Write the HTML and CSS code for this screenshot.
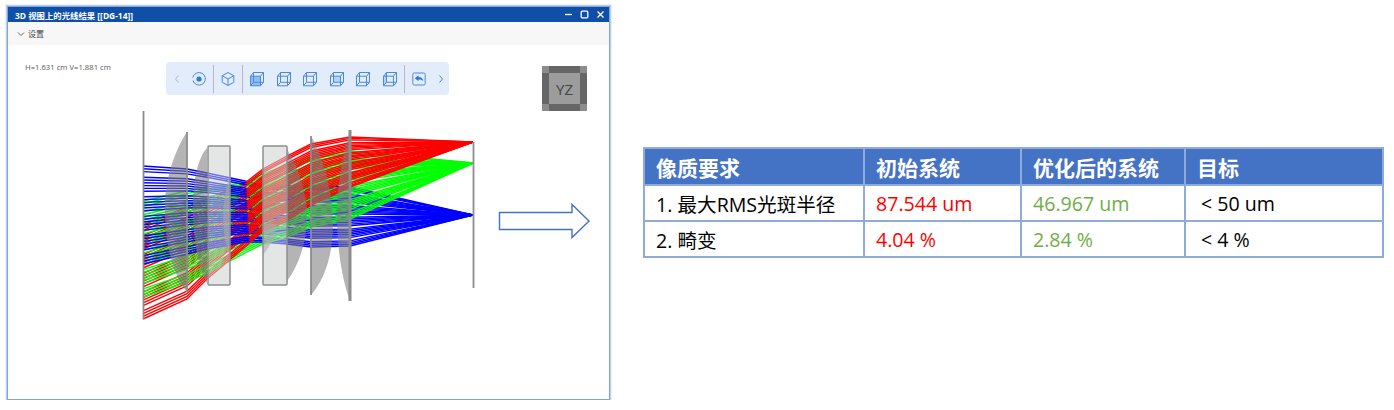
FILE: index.html
```html
<!DOCTYPE html>
<html lang="en">
<head>
    <meta charset="UTF-8" />
    <title>3D 视图上的光线结果</title>
    <link rel="stylesheet" href="styles.css">
</head>
<body>

    <svg class="defs" width="0" height="0">
        <symbol id="wire" viewBox="0 0 16 16">
            <path d="M1.5 5.200h10v9.600h-10zM4.500 1.500h10v9.800h-10zM1.500 5.200l3-3.700M11.500 5.200l3-3.700M11.500 14.800l3-3.500M1.500 14.800l3-3.500" />
        </symbol>
    </svg>

    <div class="window">
        <div class="titlebar">
            <span class="title">3D 视图上的光线结果 [[DG-14]]</span>
            <div class="win-btns">
                <svg width="9" height="9" viewBox="0 0 9 9"><path d="M1 4.500h7" /></svg>
                <svg width="9" height="9" viewBox="0 0 9 9"><rect x="1.200" y="1.200" width="6.600" height="6.600" rx="1" /></svg>
                <svg width="9" height="9" viewBox="0 0 9 9"><path d="M1.500 1.500l6 6M7.500 1.500l-6 6" /></svg>
            </div>
        </div>

        <div class="settings">
            <svg width="8" height="8" viewBox="0 0 8 8"><path d="M1 2.500l3 3 3-3" /></svg>
            <span>设置</span>
        </div>

        <div class="canvas">
            <div class="top-row">
                <div class="readout">H=1.631 cm V=1.881 cm</div>
                <div class="toolbar">
                    <svg class="chev" width="8" height="10" viewBox="0 0 8 10"><path d="M5.500 1.500L2.500 5l3 3.500" /></svg>
                    <svg class="tool" width="16" height="16" viewBox="0 0 16 16"><path d="M3.500 3.500A6.300 6.300 0 1 1 2 9.500M1.800 6.500A6.300 6.300 0 0 1 3.500 3.500" /><circle class="dot" cx="8" cy="8" r="2.600" /></svg>
                    <i class="sep"></i>
                    <svg class="tool" width="16" height="16" viewBox="0 0 16 16"><path d="M8 1.500l5.800 3.200v6.600L8 14.500l-5.800-3.200V4.700zM2.200 4.700L8 8l5.800-3.300M8 8v6.500" /></svg>
                    <i class="sep"></i>
                    <svg class="tool" width="16" height="16" viewBox="0 0 16 16"><rect class="face" x="1.500" y="5.200" width="10" height="9.600" /><use href="#wire" /></svg>
                    <svg class="tool" width="16" height="16" viewBox="0 0 16 16"><use href="#wire" /></svg>
                    <svg class="tool" width="16" height="16" viewBox="0 0 16 16"><use href="#wire" /></svg>
                    <svg class="tool" width="16" height="16" viewBox="0 0 16 16"><rect class="face pale" x="4.500" y="5.200" width="7" height="6.100" /><use href="#wire" /></svg>
                    <svg class="tool" width="16" height="16" viewBox="0 0 16 16"><use href="#wire" /></svg>
                    <svg class="tool" width="16" height="16" viewBox="0 0 16 16"><path class="face pale" d="M1.500 5.200l3-3.700v9.800l-3 3.500z" /><use href="#wire" /></svg>
                    <i class="sep"></i>
                    <svg class="tool" width="16" height="16" viewBox="0 0 16 16"><rect x="1.800" y="2" width="12.400" height="12" rx="1.500" /><path class="dot" d="M3.800 7.200L7.500 4.200v1.900c2.700 0 4.300 1.300 4.800 4-1.200-1.400-2.700-1.800-4.800-1.700v1.900z" /></svg>
                    <svg class="chev" width="8" height="10" viewBox="0 0 8 10"><path d="M2.500 1.500L5.500 5l-3 3.500" /></svg>
                </div>
                <div class="view-cube">
                    <i class="c"></i><i class="e"></i><i class="c"></i>
                    <i class="e"></i><span class="face-label">YZ</span><i class="e"></i>
                    <i class="c"></i><i class="e"></i><i class="c"></i>
                </div>
            </div>

            <!-- viewBox uses screen coords so the lens numbers stay readable -->
            <svg id="diagram" class="diagram" width="600" height="210" viewBox="8 112 600 210">
                <g id="rays"></g>
                <g class="glass">
                    <path d="M187 133C172 155 163 190 165 218C166 250 175 280 187 293z" />
                    <path d="M207 149C197 160 192 185 193 215C194 245 199 272 207 284z" />
                    <path d="M230 176C222 195 220 235 230 258z" />
                    <path d="M287 150C300 172 307 195 307 218C307 240 300 265 287 282z" />
                    <path d="M263 256C272 245 275 235 276 225L263 225z" />
                    <path d="M311 137C324 160 333 195 333 225C333 255 325 280 311 296z" />
                    <path d="M350 131C340 165 337 195 337 215C337 250 342 280 350 302z" />
                </g>
                <g class="plates">
                    <rect x="208" y="147" width="22" height="139" rx="1" />
                    <rect x="263" y="147" width="24" height="139" rx="1" />
                </g>
                <g class="edges">
                    <path d="M143.500 112V320" />
                    <path d="M187 133V293" />
                    <path d="M311 137V296" />
                    <path class="thick" d="M350 131V302" />
                    <path d="M473.500 143V289" />
                </g>
                <path class="arrow" d="M499.500 213.500H572V205.500L589 222L572 238.500V230.500H499.500z" />
            </svg>
        </div>
    </div>

    <table class="quality">
        <thead>
            <tr>
                <th class="col-a">像质要求</th>
                <th class="col-b">初始系统</th>
                <th class="col-c">优化后的系统</th>
                <th class="col-d">目标</th>
            </tr>
        </thead>
        <tbody>
            <tr>
                <td>1. 最大RMS光斑半径</td>
                <td class="bad">87.544 um</td>
                <td class="good">46.967 um</td>
                <td class="goal">&lt; 50 um</td>
            </tr>
            <tr>
                <td>2. 畸变</td>
                <td class="bad">4.04 %</td>
                <td class="good">2.84 %</td>
                <td class="goal">&lt; 4 %</td>
            </tr>
        </tbody>
    </table>

    <script src="rays.js"></script>
</body>
</html>
```

FILE: styles.css
```css
body {
    margin: 0;
    display: flex;
    align-items: flex-start;
    background: #fff;
    font-family: "Open Sans", "Noto Sans CJK SC", sans-serif;
    overflow: hidden;
}

.defs {
    position: absolute;
}

.window {
    flex: none;
    width: 603px;
    height: 394px;
    margin: 6px 0 0 7px;
    box-sizing: border-box;
    border: 1px solid #7ea6e0;
    box-shadow: 0 0 0 1px #b9cfee, 0 0 0 2px #efefef;
    background: #fff;
    display: flex;
    flex-direction: column;
}

.titlebar {
    height: 15px;
    background: #0f4fa8;
    color: #fff;
    display: flex;
    align-items: center;
    justify-content: space-between;
    padding: 0 4px 0 7px;
}

.title {
    font-size: 8.400px;
    font-weight: 700;
}

.win-btns {
    display: flex;
    gap: 7px;
}

.win-btns svg {
    fill: none;
    stroke: #fff;
    stroke-width: 1.300;
}

.settings {
    height: 23px;
    background: #f7f7f7;
    display: flex;
    align-items: center;
    gap: 3px;
    padding-left: 9px;
    font-size: 8px;
    color: #444;
}

.settings svg {
    fill: none;
    stroke: #555;
    stroke-width: 0.900;
}

.canvas {
    flex: 1;
    padding-top: 17px;
}

.top-row {
    height: 49px;
    display: flex;
    align-items: flex-start;
}

.readout {
    width: 158px;
    padding-left: 17px;
    box-sizing: border-box;
    font-size: 7.700px;
    line-height: 11px;
    color: #5a5a5a;
}

.toolbar {
    width: 283px;
    height: 33px;
    box-sizing: border-box;
    background: #e3ecfa;
    border-radius: 4px;
    display: flex;
    align-items: center;
    padding: 0 0 0 7px;
}

.tool {
    flex: none;
    fill: none;
    stroke: #4a8ade;
    stroke-width: 1;
}

.tool + .tool {
    margin-left: 10.600px;
}

.tool .dot {
    fill: #2f78d6;
    stroke: none;
}

.tool .face {
    fill: #8fbdf0;
    stroke: none;
}

.tool .pale {
    fill: #b5d3f5;
}

.chev {
    flex: none;
    fill: none;
    stroke: #9dbbe8;
    stroke-width: 1;
    margin-right: 10px;
}

.chev:last-child {
    stroke: #4a8ade;
    margin: 0 0 0 10px;
}

.sep {
    flex: none;
    width: 1px;
    height: 28px;
    margin: 0 6px;
    background: #b4b9c2;
}

.view-cube {
    width: 45px;
    height: 45px;
    margin: 4px 0 0 93px;
    display: grid;
    grid-template-columns: 7px 1fr 7px;
    grid-template-rows: 7px 1fr 7px;
}

.view-cube .c {
    background: #8c8c8c;
}

.view-cube .e {
    background: #666;
}

.face-label {
    background: #9c9c9c;
    color: #444;
    font-size: 15px;
    display: flex;
    align-items: center;
    justify-content: center;
}

.diagram {
    display: block;
}

#rays polyline {
    fill: none;
    stroke-width: 1.400;
}

.glass path {
    fill: rgba(125, 125, 125, 0.58);
}

.plates rect {
    fill: rgba(205, 208, 208, 0.55);
    stroke: #8e8e8e;
    stroke-width: 1.500;
}

.edges path {
    fill: none;
    stroke: #8c8c8c;
    stroke-width: 1.800;
}

.edges .thick {
    stroke-width: 3;
}

.arrow {
    fill: #fff;
    stroke: #4472c4;
    stroke-width: 1.400;
}

.quality {
    flex: none;
    margin: 147px 0 0 33px;
    width: 741px;
    table-layout: fixed;
    border-collapse: collapse;
    font-size: 19.600px;
    color: #000;
}

.quality th,
.quality td {
    border: 2px solid #8faadc;
    text-align: left;
    padding: 0 0 0 11px;
    font-weight: 400;
}

.quality th {
    height: 37px;
    box-sizing: border-box;
    background: #4472c4;
    color: #fff;
    font-size: 21px;
    font-weight: 700;
}

.quality td {
    height: 36px;
    box-sizing: border-box;
}

.col-a {
    width: 220px;
}

.col-b {
    width: 157px;
}

.col-c {
    width: 164px;
}

.bad {
    color: #f00;
}

.good {
    color: #70ad47;
}

.quality .goal {
    padding-left: 15px;
}
```

FILE: rays.js
```js
// each fan: colour, then top and bottom y at every surface in xs
var xs = [143, 187, 207, 245, 263, 287, 311, 350, 473];

var fans = [
    { color: '#0000ff', top: [167, 170, 174, 182, 187, 187, 187, 188, 216], bottom: [265, 255, 250, 243, 243, 245, 248, 247, 216] },
    { color: '#00ff00', top: [202, 192, 188, 184, 175, 166, 158, 152, 164], bottom: [298, 283, 274, 254, 245, 238, 228, 220, 164] },
    { color: '#ff0000', top: [226, 208, 200, 184, 170, 157, 145, 138, 143], bottom: [320, 300, 280, 248, 232, 222, 206, 188, 143] }
];

var COUNT = 36;
var group = document.getElementById('rays');

// draw the fans mixed, not one over the other, and leave a gap every few rays
for (var i = 0; i < COUNT; i++) {
    if (i % 7 === 3) continue;
    fans.forEach(function(fan) {
        var t = i / (COUNT - 1);
        var pts = xs.map(function(x, k) {
            return x + ',' + (fan.top[k] + (fan.bottom[k] - fan.top[k]) * t).toFixed(1);
        });
        var line = document.createElementNS('http://www.w3.org/2000/svg', 'polyline');
        line.setAttribute('points', pts.join(' '));
        line.setAttribute('stroke', fan.color);
        group.appendChild(line);
    });
}
```
